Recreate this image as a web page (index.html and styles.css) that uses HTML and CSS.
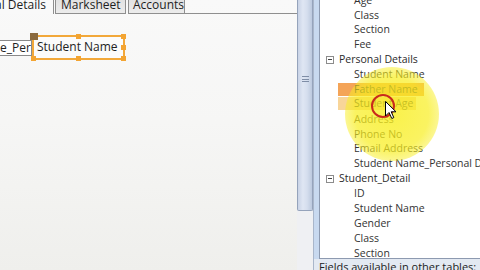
FILE: index.html
```html
<!DOCTYPE html>
<html>
<head>
<meta charset="utf-8">
<link rel="stylesheet" href="styles.css">
</head>
<body>
<div class="app">
  <div class="designer">
    <div class="tabs">
      <div class="tab active"><span class="tab-text clipped">al Details</span></div>
      <div class="tab"><span class="tab-text">Marksheet</span></div>
      <div class="tab"><span class="tab-text">Accounts</span></div>
      <div class="tab-fill"></div>
    </div>
    <div class="canvas">
      <div class="textbox"><span class="tb-text">e_Per</span></div>
      <div class="label-sel">
        <span class="label-text">Student Name</span>
        <span class="h h-tl"></span>
        <span class="h h-tm"></span>
        <span class="h h-tr"></span>
        <span class="h h-mr"></span>
        <span class="h h-bl"></span>
        <span class="h h-bm"></span>
        <span class="h h-br"></span>
      </div>
    </div>
  </div>
  <div class="vscroll">
    <div class="thumb"><span class="grip"></span></div>
  </div>
  <div class="panel">
    <div class="tree">
      <div class="list">
        <div class="item">Age</div>
        <div class="item">Class</div>
        <div class="item">Section</div>
        <div class="item">Fee</div>
        <div class="group"><span class="toggle"></span>Personal Details</div>
        <div class="item">Student Name</div>
        <div class="item"><span class="hl hl-strong">Father Name</span></div>
        <div class="item"><span class="hl hl-soft">Student Age</span></div>
        <div class="item">Address</div>
        <div class="item">Phone No</div>
        <div class="item">Email Address</div>
        <div class="item">Student Name_Personal Details</div>
        <div class="group"><span class="toggle"></span>Student_Detail</div>
        <div class="item">ID</div>
        <div class="item">Student Name</div>
        <div class="item">Gender</div>
        <div class="item">Class</div>
        <div class="item">Section</div>
      </div>
    </div>
    <div class="footer">Fields available in other tables:</div>
  </div>
  <div class="glow"></div>
  <div class="ring"></div>
  <svg class="cursor" width="12" height="19" viewBox="0 0 12 19">
    <path d="M0.5 0.5 L0.5 15 L4 11.5 L6.8 17.5 L8.8 16.6 L6.2 10.8 L11 10.8 Z" fill="#fff" stroke="#000" stroke-width="1"/>
  </svg>
</div>
</body>
</html>
```

FILE: styles.css
```css
* { box-sizing: border-box; }
html, body { margin: 0; padding: 0; }
body {
  width: 480px;
  height: 270px;
  overflow: hidden;
  font-family: "Open Sans", "Noto Sans", sans-serif;
  background: #f0f0f0;
  color: #333;
}
.app {
  position: relative;
  width: 480px;
  height: 270px;
  display: flex;
  overflow: hidden;
}
.designer {
  width: 297px;
  flex: none;
  height: 270px;
  display: flex;
  flex-direction: column;
  background: linear-gradient(to bottom, #f9f9f9 0%, #f6f6f5 45%, #efefec 100%);
}
.tabs {
  display: flex;
  height: 14px;
  flex: none;
}
.tab {
  flex: none;
  height: 14px;
  padding: 0 0 0 5px;
  margin-right: 2px;
  border: 1px solid #8f8f8f;
  border-top: none;
  background: linear-gradient(to bottom, #e2e2e2, #ececec);
  overflow: hidden;
  white-space: nowrap;
}
.tab.active {
  width: 54px;
  padding: 0;
  border-left: none;
  border-bottom: none;
  background: #f9f9f9;
  margin-right: 1px;
}
.tab:nth-child(2) { width: 71px; }
.tab:nth-child(3) { width: 57px; margin-right: 0; padding-left: 4px; }
.tab-text {
  display: block;
  font-size: 12px;
  line-height: 10px;
  color: #1e1e1e;
}
.tab-text.clipped { margin-left: -5px; }
.tab-fill {
  flex: 1;
  border-bottom: 1px solid #8f8f8f;
}
.canvas {
  position: relative;
  flex: 1;
}
.textbox {
  position: absolute;
  left: -2px;
  top: 26px;
  width: 34px;
  height: 16px;
  border: 1px solid #8a8a8a;
  background: #fff;
  overflow: hidden;
}
.tb-text {
  display: block;
  font-size: 12px;
  line-height: 14px;
  white-space: nowrap;
  color: #222;
  margin-left: 1px;
  overflow: hidden;
}
.label-sel {
  position: absolute;
  left: 32px;
  top: 21px;
  width: 93px;
  height: 25px;
  border: 2px solid #f2a83a;
  background: #fbfbfb;
}
.label-text {
  display: block;
  font-size: 12px;
  line-height: 19px;
  padding-left: 3px;
  color: #222;
  white-space: nowrap;
}
.h {
  position: absolute;
  width: 5px;
  height: 5px;
  background: #f3a432;
}
.h-tl { left: -4px; top: -4px; width: 8px; height: 7px; background: #8b6a3e; }
.h-tm { left: 42px; top: -3px; }
.h-tr { right: -3px; top: -3px; }
.h-mr { right: -3px; top: 8px; }
.h-bl { left: -3px; bottom: -3px; }
.h-bm { left: 42px; bottom: -3px; }
.h-br { right: -3px; bottom: -3px; }

.vscroll {
  width: 17px;
  flex: none;
  height: 270px;
  background: #eff0f3;
  border-right: 1px solid #a9b6ca;
}
.thumb {
  position: relative;
  height: 211px;
  border: 1px solid #95a3bb;
  border-top: none;
  border-radius: 0 0 2px 2px;
  background: linear-gradient(to right, #c9d3e6 0%, #dfe6f3 35%, #d5deee 65%, #bcc9de 100%);
}
.grip {
  position: absolute;
  left: 4px;
  top: 76px;
  width: 7px;
  height: 6px;
  border-top: 1px solid #7f8da6;
  border-bottom: 1px solid #7f8da6;
}
.grip::after {
  content: "";
  position: absolute;
  left: 0;
  right: 0;
  top: 1.5px;
  border-top: 1px solid #7f8da6;
}
.panel {
  flex: 1;
  min-width: 0;
  height: 270px;
  display: flex;
  flex-direction: column;
  background: #c8d9ef;
  padding-left: 5px;
}
.tree {
  height: 259px;
  flex: none;
  background: #fff;
  border-left: 1px solid #8d9ab0;
  border-bottom: 1px solid #8d9ab0;
  overflow: hidden;
}
.list {
  margin-top: -7.3px;
}
.item, .group {
  height: 14.875px;
  line-height: 14.875px;
  font-size: 10.5px;
  white-space: nowrap;
  color: #333;
}
.item { padding-left: 34px; }
.group {
  display: flex;
  align-items: center;
  padding-left: 6px;
  color: #2a2a2a;
}
.toggle {
  position: relative;
  width: 8px;
  height: 8px;
  border: 1px solid #8c8c8c;
  margin-right: 5px;
  flex: none;
  background: #fff;
}
.toggle::after {
  content: "";
  position: absolute;
  left: 1px;
  right: 1px;
  top: 2.5px;
  border-top: 1px solid #444;
}
.hl {
  display: inline-block;
  margin-left: -16px;
  padding: 0 6px 0 16px;
  height: 13.5px;
  line-height: 13.5px;
  margin-top: 1px;
  vertical-align: top;
}
.hl-strong { background: #f4a458; }
.hl-soft { background: #f8d599; padding-right: 3px; margin-top: 0; }
.footer {
  flex: 1;
  background: #e3e9f2;
  margin-left: -5px;
  padding-left: 5px;
  font-size: 11px;
  line-height: 14px;
  padding-top: 1px;
  color: #222;
  white-space: nowrap;
  overflow: hidden;
}
.glow {
  position: absolute;
  left: 345px;
  top: 67px;
  width: 94px;
  height: 94px;
  border-radius: 50%;
  background: radial-gradient(circle, rgba(248, 238, 30, 0.8) 0%, rgba(248, 238, 30, 0.7) 55%, rgba(248, 238, 50, 0.35) 82%, rgba(248, 238, 60, 0) 100%);
  pointer-events: none;
}
.ring {
  position: absolute;
  left: 371px;
  top: 94px;
  width: 24px;
  height: 24px;
  border: 2.5px solid #c92a1c;
  border-radius: 50%;
}
.cursor {
  position: absolute;
  left: 385px;
  top: 101px;
}
```
